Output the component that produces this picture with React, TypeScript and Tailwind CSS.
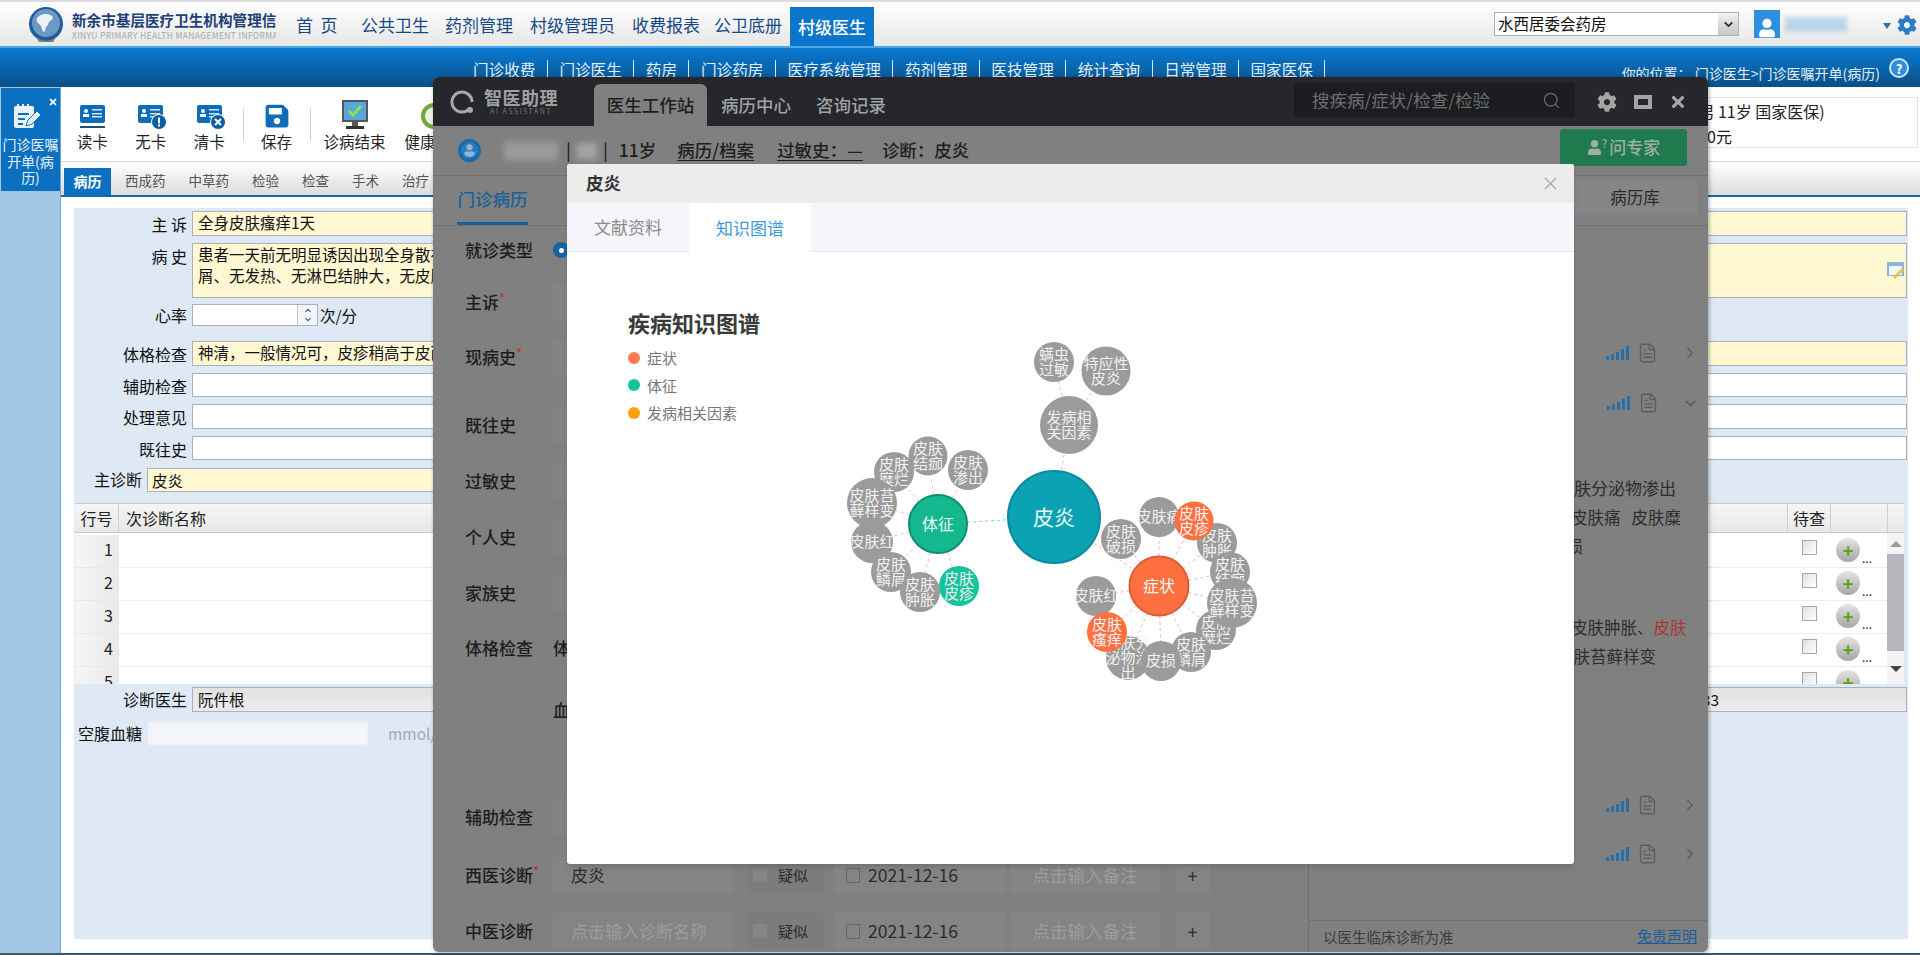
import React from "react";
import { ChevronDown, ChevronRight, FileText, Search, X } from "lucide-react";
import { FaCog, FaUser, FaTimes, FaSave } from "react-icons/fa";

const navItems = [
  { label: "首  页", cls: "ml-0 w-[42px] whitespace-pre" },
  { label: "公共卫生", cls: "ml-[23px]" },
  { label: "药剂管理", cls: "ml-[16px]" },
  { label: "村级管理员", cls: "ml-[17px]" },
  { label: "收费报表", cls: "ml-[17px]" },
  { label: "公卫底册", cls: "ml-[14px]" },
];

const subNav = ["门诊收费", "门诊医生", "药房", "门诊药房", "医疗系统管理", "药剂管理", "医技管理", "统计查询", "日常管理", "国家医保"];

const tabs = ["西成药", "中草药", "检验", "检查", "手术", "治疗"];

const GREY = "#9b9b9b";
const ORANGE = "#ff7040";
const TEAL = "#17c39c";

// graph coordinates are relative to the svg box
const nodes = [
  { id: "a", x: 234, y: 42, r: 20, c: GREY, t: ["螨虫", "过敏"] },
  { id: "b", x: 286, y: 51, r: 24.5, c: GREY, t: ["特应性", "皮炎"] },
  { id: "c", x: 249, y: 105, r: 29, c: GREY, t: ["发病相", "关因素"] },
  { id: "d", x: 108, y: 136, r: 19.5, c: GREY, t: ["皮肤", "结痂"] },
  { id: "e", x: 74, y: 152, r: 20, c: GREY, t: ["皮肤", "糜烂"] },
  { id: "f", x: 148, y: 150, r: 20, c: GREY, t: ["皮肤", "渗出"] },
  { id: "g", x: 52, y: 222, r: 21, c: GREY, t: ["皮肤红"] },
  { id: "h", x: 52, y: 183, r: 25, c: GREY, t: ["皮肤苔", "藓样变"] },
  { id: "i", x: 71, y: 252, r: 20, c: GREY, t: ["皮肤", "鳞屑"] },
  { id: "j", x: 100, y: 272, r: 20, c: GREY, t: ["皮肤", "肿胀"] },
  { id: "k", x: 139, y: 266, r: 20, c: TEAL, t: ["皮肤", "皮疹"] },
  { id: "l", x: 301, y: 219, r: 20, c: GREY, t: ["皮肤", "破损"] },
  { id: "m", x: 339, y: 197, r: 20, c: GREY, t: ["皮肤痛"] },
  { id: "o", x: 397, y: 223, r: 20, c: GREY, t: ["皮肤", "肿胀"] },
  { id: "n", x: 374, y: 201, r: 19.5, c: ORANGE, t: ["皮肤", "皮疹"] },
  { id: "p", x: 410, y: 252, r: 20, c: GREY, t: ["皮肤", "结痂"] },
  { id: "r", x: 396, y: 310, r: 20, c: GREY, t: ["皮肤", "糜烂"] },
  { id: "q", x: 412, y: 283, r: 25, c: GREY, t: ["皮肤苔", "藓样变"] },
  { id: "s", x: 371, y: 332, r: 20, c: GREY, t: ["皮肤", "鳞屑"] },
  { id: "u", x: 308, y: 338, r: 22, c: GREY, t: ["皮肤分", "泌物渗", "出"] },
  { id: "t", x: 341, y: 341, r: 20, c: GREY, t: ["皮损"] },
  { id: "w", x: 276, y: 276, r: 20, c: GREY, t: ["皮肤红"] },
  { id: "v", x: 287, y: 312, r: 20, c: ORANGE, t: ["皮肤", "瘙痒"] },
];

const hubs = [
  { x: 234, y: 197, r: 46, c: "#0ba2b4", s: "#0a8a9e", t: "皮炎", f: 21 },
  { x: 118, y: 204, r: 29, c: "#15b78f", s: "#0f8f72", t: "体征", f: 16 },
  { x: 339, y: 266, r: 29.5, c: "#ff7040", s: "#d95c33", t: "症状", f: 16 },
];

const edges = [
  { from: [234, 197], to: [118, 204], c: "#7fd4cc" },
  { from: [234, 197], to: [249, 105], c: "#c9c9c9" },
  { from: [234, 197], to: [339, 266], c: "#f3b8a0" },
  { from: [249, 105], to: [234, 42], c: "#c9c9c9" },
  { from: [249, 105], to: [286, 51], c: "#c9c9c9" },
  ...["d", "e", "f", "g", "h", "i", "j", "k"].map((id) => {
    const n = nodes.find((x) => x.id === id)!;
    return { from: [118, 204], to: [n.x, n.y], c: "#e3c4c0" };
  }),
  ...["l", "m", "n", "o", "p", "q", "r", "s", "t", "u", "v", "w"].map((id) => {
    const n = nodes.find((x) => x.id === id)!;
    return { from: [339, 266], to: [n.x, n.y], c: "#eeb9b0" };
  }),
];

const KnowledgeGraph = () => (
  <svg viewBox="0 0 460 380" className="absolute left-[253px] top-[156px] h-[380px] w-[460px]">
    {edges.map((e, i) => (
      <line key={i} x1={e.from[0]} y1={e.from[1]} x2={e.to[0]} y2={e.to[1]} stroke={e.c} strokeWidth="1" strokeDasharray="3 3" />
    ))}
    {nodes.map((n) => (
      <g key={n.id}>
        <circle cx={n.x} cy={n.y} r={n.r} fill={n.c} />
        {n.t.map((line, i) => (
          <text
            key={i}
            x={n.x}
            y={n.y + 5 + (i - (n.t.length - 1) / 2) * 15}
            textAnchor="middle"
            fontSize="15"
            fill="#f1f1f1"
            fontFamily="'Noto Sans CJK SC', sans-serif"
          >
            {line}
          </text>
        ))}
      </g>
    ))}
    {hubs.map((h) => (
      <g key={h.t}>
        <circle cx={h.x} cy={h.y} r={h.r} fill={h.c} stroke={h.s} strokeWidth="2" />
        <text x={h.x} y={h.y + h.f * 0.36} textAnchor="middle" fontSize={h.f} fill="#e8fbf8" fontFamily="'Noto Sans CJK SC', sans-serif">
          {h.t}
        </text>
      </g>
    ))}
  </svg>
);

const CardIcon = ({ badge }: { badge?: "warn" | "x" }) => (
  <svg width="30" height="26" viewBox="0 0 30 26">
    <rect x="1" y="1" width="25" height="18" rx="2" fill="#0f6cb8" />
    <circle cx="7" cy="7" r="2" fill="#fff" />
    <rect x="4" y="10" width="6" height="3" fill="#fff" />
    <rect x="13" y="5" width="10" height="1.5" fill="#cfe4f5" />
    <rect x="13" y="9" width="10" height="1.5" fill="#cfe4f5" />
    <rect x="13" y="12" width="10" height="1.5" fill="#cfe4f5" />
    {!badge && <rect x="1" y="22" width="25" height="2" fill="#1a4f80" />}
    {badge && <circle cx="22" cy="18" r="7.5" fill="#0b5ea4" stroke="#fff" />}
    {badge === "warn" && <rect x="21" y="13.5" width="2" height="6" fill="#fff" />}
    {badge === "warn" && <rect x="21" y="20.5" width="2" height="2" fill="#fff" />}
    {badge === "x" && <path d="M19 15l6 6M25 15l-6 6" stroke="#fff" strokeWidth="2" />}
  </svg>
);

const MonitorIcon = () => (
  <svg width="28" height="32" viewBox="0 0 28 32">
    <rect x="1" y="1" width="26" height="22" fill="#555" />
    <rect x="3" y="3" width="22" height="18" fill="#57a6dc" />
    <path d="M8 12l4 4 8-9" stroke="#8fe04a" strokeWidth="3" fill="none" />
    <rect x="11" y="23" width="6" height="4" fill="#555" />
    <rect x="5" y="27" width="18" height="3" fill="#333" />
  </svg>
);

const Signal = () => (
  <span className="flex h-[14px] items-end gap-[2px]">
    <span className="h-[4px] w-[3px] bg-[#2a6ea6]" />
    <span className="h-[6px] w-[3px] bg-[#2a6ea6]" />
    <span className="h-[8px] w-[3px] bg-[#2a6ea6]" />
    <span className="h-[11px] w-[3px] bg-[#2a6ea6]" />
    <span className="h-[14px] w-[3px] bg-[#2a6ea6]" />
  </span>
);

const ResultRow = ({ open, cls }: { open?: boolean; cls: string }) => (
  <div className={`flex h-[40px] items-center justify-end pr-[9px] ${cls}`}>
    <Signal />
    <FileText className="ml-[8px] h-[24px] w-[21px] text-[#5c5c5c]" strokeWidth={1.5} />
    {open ? (
      <ChevronDown className="ml-[23px] h-[17px] w-[17px] text-[#5c5c5c]" />
    ) : (
      <ChevronRight className="ml-[23px] h-[18px] w-[18px] text-[#5c5c5c]" />
    )}
  </div>
);

const FormRow = ({
  label,
  cls,
  h,
  yellow,
  lines,
}: {
  label: string;
  cls: string;
  h: string;
  yellow?: boolean;
  lines?: string[];
}) => (
  <div className={`flex ${cls} ${h}`}>
    <label className="w-[113px] pt-[2px] text-right text-[16px] leading-[22px] text-[#111]">{label}</label>
    <div
      className={`ml-[5px] flex-1 overflow-hidden border border-[#aab0bf] px-[5px] text-[15.5px] leading-[21px] text-[#111] ${
        yellow ? "bg-[#fff8d2]" : "bg-white"
      }`}
    >
      {lines?.map((l) => (
        <div key={l} className="whitespace-nowrap">
          {l}
        </div>
      ))}
    </div>
  </div>
);

const TableRow = ({ n }: { n: number }) => (
  <div className="flex h-[33px] shrink-0">
    <div className="w-[44px] border-b border-[#e8e8e8] bg-gradient-to-r from-[#f6f6f6] to-[#e9e9e9] pr-[6px] pt-[2px] text-right text-[16px] text-[#222]">
      {n}
    </div>
    <div className="flex-1 border-b border-[#ececec] bg-white" />
    <div className="flex w-[44px] justify-center border-b border-[#ececec] bg-white pt-[5px]">
      <span className="h-[15px] w-[15px] border border-[#a8a8a8] bg-gradient-to-br from-[#e0e0e0] to-white" />
    </div>
    <div className="relative flex w-[56px] justify-start border-b border-[#ececec] bg-white pl-[5px] pt-[3px]">
      <span className="flex h-[24px] w-[24px] items-center justify-center rounded-full bg-gradient-to-b from-[#e4e4e4] to-[#a6a6a6] text-[18px] font-bold leading-none text-[#5aa012]">
        +
      </span>
      <span className="mb-[3px] ml-[2px] self-end text-[12px] leading-none text-[#222]">...</span>
    </div>
  </div>
);

const DiagnosisRow = ({ cls, name, filled }: { cls: string; name: string; filled?: boolean }) => (
  <div className={`flex h-[40px] items-center pl-[32px] ${cls}`}>
    <span className="w-[88px] text-[17px] font-medium text-[#1d1d1d]">
      {name}
      {filled && <sup className="text-[#c0392b]">*</sup>}
    </span>
    <div className={`flex h-[36px] w-[180px] items-center whitespace-nowrap bg-[#848484] pl-[18px] text-[17px] ${filled ? "text-[#2b2b2b]" : "text-[#9d9d9d]"}`}>
      {filled ? "皮炎" : "点击输入诊断名称"}
    </div>
    <div className="ml-[16px] flex h-[36px] w-[74px] items-center bg-[#7c7c7c] pl-[4px]">
      <span className="h-[14px] w-[14px] bg-[#858585]" />
      <span className="ml-[11px] text-[15px] text-[#2b2b2b]">疑似</span>
    </div>
    <div className="ml-[11px] flex h-[36px] w-[172px] items-center bg-[#848484] pl-[12px] text-[17.5px] text-[#2b2b2b]">
      <span className="mr-[8px] h-[15px] w-[14px] border border-[#666]" />
      2021-12-16
    </div>
    <div className="ml-[4px] flex h-[36px] w-[150px] items-center justify-center bg-[#848484] text-[17.5px] text-[#9d9d9d]">点击输入备注</div>
    <div className="ml-[15px] flex h-[36px] w-[35px] items-center justify-center bg-[#848484] text-[18px] text-[#2b2b2b]">+</div>
  </div>
);

const AsstRow = ({ label, cls, mark, children }: { label: string; cls: string; mark?: boolean; children?: React.ReactNode }) => (
  <div className={`flex h-[40px] items-center pl-[32px] ${cls}`}>
    <span className="w-[88px] text-[17px] font-medium text-[#1d1d1d]">
      {label}
      {mark && <sup className="text-[#c0392b]">*</sup>}
    </span>
    {children ?? <div className="h-[36px] flex-1 bg-[#838383]" />}
  </div>
);

const Modal = () => (
  <div className="absolute left-[134px] top-[87px] flex h-[700px] w-[1007px] flex-col rounded-[3px] bg-white shadow-md">
    <div className="flex h-[39px] shrink-0 items-center justify-between rounded-t-[3px] bg-[#ececec] pl-[19px] pr-[13px]">
      <span className="text-[17.5px] font-bold text-[#333]">皮炎</span>
      <X className="h-[21px] w-[21px] text-[#a8a8a8]" strokeWidth={1.5} />
    </div>
    <div className="flex h-[49px] shrink-0 border-b border-[#e4e6ee] bg-[#f5f6fb]">
      <div className="flex w-[122px] items-center justify-center text-[17px] text-[#8a8a8a]">文献资料</div>
      <div className="-mb-px flex w-[122px] items-center justify-center bg-white text-[17px] text-[#3b9ae1]">知识图谱</div>
    </div>
    <div className="pl-[61px] pt-[55px]">
      <h2 className="text-[22px] font-bold leading-[30px] text-[#3a3a3a]">疾病知识图谱</h2>
      <div className="mt-[7px] flex flex-col text-[15px] leading-[27.5px] text-[#777]">
        <div className="flex items-center">
          <span className="mr-[7px] h-[12px] w-[12px] rounded-full bg-[#ff7a55]" />
          症状
        </div>
        <div className="flex items-center">
          <span className="mr-[7px] h-[12px] w-[12px] rounded-full bg-[#12c49a]" />
          体征
        </div>
        <div className="flex items-center">
          <span className="mr-[7px] h-[12px] w-[12px] rounded-full bg-[#ff9f0a]" />
          发病相关因素
        </div>
      </div>
    </div>
    <KnowledgeGraph />
  </div>
);

const AssistantWindow = () => (
  <div className="absolute left-[433px] top-[-10px] flex h-[875px] w-[1275px] flex-col overflow-hidden rounded-[6px] bg-[#808080] shadow-[1px_1px_4px_rgba(0,0,0,0.35)]">
    <div className="flex h-[49px] shrink-0 bg-[#25272c]">
      <div className="flex w-[161px] items-center pl-[17px]">
        <svg width="26" height="26" viewBox="0 0 26 26" fill="none">
          <path d="M20 19a10 10 0 1 1 2-6" stroke="#a8a8a8" strokeWidth="3" />
          <circle cx="20" cy="21" r="3" fill="#a8a8a8" />
        </svg>
        <div className="ml-[8px] flex flex-col items-center leading-none">
          <span className="text-[18px] font-bold tracking-[0.5px] text-[#a0a0a0]">智医助理</span>
          <span className="mt-[2px] text-[7px] tracking-[1.5px] text-[#777]">AI ASSISTANT</span>
        </div>
      </div>
      <div className="mt-[7px] flex h-[42px] w-[113px] items-center justify-center rounded-t-[6px] bg-[#808080] text-[17.5px] font-medium text-[#1e1e1e]">
        医生工作站
      </div>
      <div className="ml-[14px] flex items-center whitespace-nowrap pt-[8px] text-[17.5px] font-medium text-[#a2a2a2]">病历中心</div>
      <div className="ml-[25px] flex items-center whitespace-nowrap pt-[8px] text-[17.5px] font-medium text-[#a2a2a2]">咨询记录</div>
      <div className="ml-[408px] mt-[6px] flex h-[34px] w-[281px] items-center justify-between rounded-[3px] bg-[#1b1d21] pl-[18px] pr-[14px] text-[17.5px] text-[#6e6e6e]">
        搜疾病/症状/检查/检验
        <Search className="h-[19px] w-[19px]" strokeWidth={1.5} />
      </div>
      <FaCog className="ml-[22px] mt-[15px] h-[20px] w-[20px] text-[#a4a4a4]" />
      <span className="ml-[17px] mt-[18px] h-[14px] w-[18px] border-[4px] border-[#a4a4a4]" />
      <FaTimes className="ml-[17px] mt-[16px] h-[18px] w-[18px] text-[#a4a4a4]" />
    </div>

    <div className="flex h-[50px] shrink-0 items-center whitespace-nowrap border-b border-[#727272] pl-[25px] text-[17.5px] font-medium text-[#1f1f1f]">
      <FaUser className="box-content h-[13px] w-[13px] rounded-full border-[3px] border-[#1a6aa8] bg-[#2a7ab8] p-[2px] text-[#8fb6d4]" />
      <span className="ml-[23px] h-[18px] w-[54px] bg-[#9a9a9a] blur-[3px]" />
      <span className="ml-[8px]">|</span>
      <span className="ml-[6px] h-[16px] w-[20px] bg-[#a5a5a5] blur-[3px]" />
      <span className="ml-[6px]">|</span>
      <span className="ml-[11px]">11岁</span>
      <span className="ml-[21px] underline underline-offset-[3px]">病历/档案</span>
      <span className="ml-[23px] underline underline-offset-[3px]">过敏史：—</span>
      <span className="ml-[19px]">诊断：皮炎</span>
      <div className="mb-[7px] ml-auto mr-[21px] flex h-[37px] w-[127px] items-center justify-center rounded-[3px] bg-[#1f7a4e] text-[17px] text-[#9cb0a6]">
        <FaUser className="h-[15px] w-[15px]" />
        <span className="mb-[8px] mr-[2px] text-[11px] leading-none">?</span>
        问专家
      </div>
    </div>

    <div className="flex min-h-0 flex-1">
      <div className="w-[876px] shrink-0 border-r border-[#707070]">
        <div className="flex h-[50px] border-b border-[#727272] pl-[24px]">
          <span className="flex w-[71px] items-center justify-center whitespace-nowrap border-b-[3px] border-[#17609a] text-[17.5px] font-medium text-[#1a6299]">门诊病历</span>
        </div>
        <AsstRow label="就诊类型" cls="mt-[4px]">
          <span className="flex h-[16px] w-[16px] items-center justify-center rounded-full bg-[#1565a5]">
            <span className="h-[5px] w-[5px] rounded-full bg-white" />
          </span>
        </AsstRow>
        <AsstRow label="主诉" cls="mt-[12px]" mark />
        <AsstRow label="现病史" cls="mt-[15px]" mark />
        <AsstRow label="既往史" cls="mt-[28px]" />
        <AsstRow label="过敏史" cls="mt-[16px]" />
        <AsstRow label="个人史" cls="mt-[16px]" />
        <AsstRow label="家族史" cls="mt-[16px]" />
        <AsstRow label="体格检查" cls="mt-[15px]">
          <span className="text-[17px] font-medium text-[#1d1d1d]">体温</span>
        </AsstRow>
        <AsstRow label="" cls="mt-[22px]">
          <span className="text-[17px] font-medium text-[#1d1d1d]">血压</span>
        </AsstRow>
        <AsstRow label="辅助检查" cls="mt-[67px]" />
        <DiagnosisRow cls="mt-[18px]" name="西医诊断" filled />
        <DiagnosisRow cls="mt-[16px]" name="中医诊断" />
      </div>

      <div className="flex min-w-0 flex-1 flex-col">
        <div className="h-[50px] border-b border-[#727272] pr-[11px] pt-[4px]">
          <div className="ml-auto flex h-[35px] w-[124px] items-center justify-center bg-[#868686] text-[16.5px] text-[#2a2a2a]">病历库</div>
        </div>
        <ResultRow cls="mt-[107px]" />
        <ResultRow cls="mt-[10px]" open />
        <div className="mt-[50px] whitespace-nowrap text-[16.5px] leading-[29.5px] text-[#2e2e2e]">
          <div className="pl-[248px] text-[17px]">皮肤分泌物渗出</div>
          <div className="pl-[262px]">皮肤痛&nbsp;&nbsp;&nbsp;皮肤糜</div>
          <div className="pl-[241px]">破损</div>
          <div className="h-[51px]" />
          <div className="pl-[262px]">
            皮肤肿胀、<span className="text-[#a83a36]">皮肤</span>
          </div>
          <div className="pl-[248px]">皮肤苔藓样变</div>
        </div>
        <ResultRow cls="mt-[113px]" />
        <ResultRow cls="mt-[9px]" />
        <div className="mt-auto flex h-[32px] items-center justify-between border-t border-[#727272] pl-[14px] pr-[11px] text-[14.5px] text-[#3c3c3c]">
          以医生临床诊断为准
          <span className="text-[15px] text-[#1a5f9a] underline">免责声明</span>
        </div>
      </div>
    </div>

    <Modal />
  </div>
);

const Toolbar = () => (
  <div className="flex h-[75px] shrink-0 border-b border-[#d8d8d8] pl-[2px] text-[15.5px] text-[#222]">
    {[
      { label: "读卡" },
      { label: "无卡", badge: "warn" as const },
      { label: "清卡", badge: "x" as const },
    ].map((b) => (
      <div key={b.label} className="flex w-[58.5px] flex-col items-center pt-[17px]">
        <span className="h-[26px] pl-[3px]">
          <CardIcon badge={b.badge} />
        </span>
        <span className="mt-[1px] leading-[20px]">{b.label}</span>
      </div>
    ))}
    <span className="ml-[4px] mt-[22px] h-[32px] w-px bg-[#d0d0d0]" />
    <div className="flex w-[66px] flex-col items-center pt-[16px]">
      <FaSave className="h-[26px] w-[24px] text-[#0f6cb8]" />
      <span className="mt-[2px] leading-[20px]">保存</span>
    </div>
    <span className="mt-[22px] h-[32px] w-px bg-[#d0d0d0]" />
    <div className="flex w-[88px] flex-col items-center pt-[12px]">
      <MonitorIcon />
      <span className="leading-[20px]">诊病结束</span>
    </div>
    <div className="ml-[6px] flex w-[64px] flex-col items-start pt-[16px]">
      <span className="ml-[16px] h-[26px] w-[26px] rounded-full border-[4px] border-[#6fa83c] bg-[#eef5e4]" />
      <span className="mt-[2px] leading-[20px]">健康</span>
    </div>
    <div className="ml-auto mr-[2px] mt-[10px] flex h-[51px] w-[320px] flex-col border border-[#e2e2e2] pt-px text-[16px] leading-[25px]">
      <div className="pl-[94px]">(男 11岁 国家医保)</div>
      <div className="pl-[108px]">0元</div>
    </div>
  </div>
);

const App = () => (
  <div className="flex h-[955px] w-[1920px] flex-col overflow-hidden bg-white font-['Noto_Sans_CJK_SC',sans-serif]">
    <header className="flex h-[46px] shrink-0 border-t-2 border-[#dcdcdc] bg-gradient-to-b from-white to-[#e6e6e6] pl-[28px]">
      <svg width="36" height="38" viewBox="0 0 36 38" className="mt-[4px] shrink-0">
        <circle cx="18" cy="18" r="17" fill="#1d5c9e" />
        <circle cx="18" cy="17" r="14" fill="#6d97c4" />
        <path d="M9 12c4-5 11-5 15-2 2 2 0 4-2 5s-1 4-3 5-1 5-3 6c-2-1-2-4-3-6s-6-4-4-8z" fill="#eef2f7" />
        <path d="M8 31c5 5 15 5 20 0l-3 5H11z" fill="#7d7d7d" />
      </svg>
      <div className="ml-[8px] w-[204px] shrink-0 overflow-hidden whitespace-nowrap pt-[8px]">
        <div className="text-[14.6px] font-bold leading-[20px] text-[#1f3f78]">新余市基层医疗卫生机构管理信</div>
        <div className="text-[8.5px] leading-[10px] tracking-[0.35px] text-[#a8a8a8]">XINYU PRIMARY HEALTH MANAGEMENT INFORMATI</div>
      </div>
      <nav className="ml-[20px] flex">
        {navItems.map((n) => (
          <span key={n.label} className={`mt-[9px] text-[17px] leading-[28px] text-[#17498a] ${n.cls}`}>
            {n.label}
          </span>
        ))}
        <span className="ml-[8px] mt-[5px] flex h-[39px] w-[84px] items-center justify-center bg-[#0c76cc] text-[17px] font-medium text-white">村级医生</span>
      </nav>
      <div className="ml-auto flex h-[24px] w-[245px] items-center justify-between self-center border border-[#b0b0b0] bg-white pl-[3px] text-[15.5px] text-[#111]">
        水西居委会药房
        <span className="flex h-[22px] w-[20px] items-center justify-center bg-gradient-to-b from-[#f2f2f2] to-[#c6c6c6]">
          <ChevronDown className="h-[13px] w-[13px] text-[#234]" strokeWidth={3.5} />
        </span>
      </div>
      <span className="ml-[15px] mt-[8px] flex h-[28px] w-[26px] items-end justify-center bg-[#2e8fe0]">
        <FaUser className="h-[20px] w-[16px] text-white" />
      </span>
      <span className="ml-[5px] mt-[15px] h-[15px] w-[62px] bg-[#bcd4e8] blur-[2px]" />
      <span className="ml-[36px] mt-[21px] h-0 w-0 border-x-[4px] border-t-[6px] border-x-transparent border-t-[#2c6eb0]" />
      <FaCog className="ml-[6px] mr-[3px] mt-[13px] h-[20px] w-[20px] text-[#2c7cc4]" />
    </header>

    <div className="flex h-[41px] shrink-0 items-start border-t-[2px] border-[#4aa6e4] bg-gradient-to-b from-[#0a78d0] via-[#0866ae] to-[#0a4f85] pl-[473px]">
      <div className="flex items-start gap-[11.5px] pt-[10px] text-[15.6px] leading-[22px] text-[#e3eef8]">
        {subNav.map((s, i) => (
          <React.Fragment key={s}>
            {i > 0 && <span className="mt-[2px] h-[20px] w-px bg-[#dce9f5]" />}
            <span>{s}</span>
          </React.Fragment>
        ))}
        <span className="mt-[2px] h-[20px] w-px bg-[#dce9f5]" />
      </div>
      <span className="ml-auto whitespace-pre pt-[15px] text-[14px] leading-[20px] text-[#e3eef8]">你的位置： 门诊医生&gt;门诊医嘱开单(病历)</span>
      <span className="ml-[9px] mr-[11px] mt-[10px] flex h-[20px] w-[20px] items-center justify-center rounded-full border-2 border-[#cfe6f8] bg-[#2f8fd8] text-[13px] font-bold leading-none text-white">?</span>
    </div>

    <main className="relative flex min-h-0 flex-1">
      <aside className="w-[61px] shrink-0 border-r border-[#6aa9dc] bg-[#a2c5e2] pl-px pt-px">
        <div className="relative flex h-[103px] w-[59px] flex-col items-center bg-[#0c70c0] pt-[14px] text-white">
          <svg width="30" height="28" viewBox="0 0 30 28" className="mr-[8px]">
            <rect x="2" y="4" width="20" height="22" rx="2" fill="#e8f2fa" />
            <path d="M6 2v5M11 2v5M16 2v5" stroke="#e8f2fa" strokeWidth="2" />
            <path d="M6 12h11M6 17h7M6 22h5" stroke="#0c70c0" strokeWidth="2" />
            <path d="M14 24l2-6 9-9 4 4-9 9z" fill="#e8f2fa" stroke="#0c70c0" />
          </svg>
          <FaTimes className="absolute right-[2px] top-[9px] h-[10px] w-[10px]" />
          <div className="mt-[6px] w-[56px] text-center text-[14px] leading-[16.5px] text-[#e6f1fb]">门诊医嘱开单(病历)</div>
        </div>
      </aside>

      <div className="flex min-w-0 flex-1 flex-col">
        <Toolbar />
        <div className="flex h-[35px] shrink-0 items-end border-b-[2px] border-[#1368a8] bg-gradient-to-b from-white to-[#dcdcdc] pl-[3px]">
          <span className="flex h-[27px] w-[47px] items-center justify-center bg-[#0c70c0] text-[14px] font-bold text-white">病历</span>
          <div className="mb-[5px] ml-[14px] flex gap-[23px] text-[13.5px] leading-[20px] text-[#555]">
            {tabs.map((t) => (
              <span key={t}>{t}</span>
            ))}
          </div>
        </div>

        <section className="ml-[13px] mr-[12px] mt-[11px] flex h-[731px] flex-col bg-[#dfe8f5] pr-px">
          <FormRow label="主 诉" cls="mt-[3px]" h="h-[25px]" yellow lines={["全身皮肤瘙痒1天"]} />
          <div className="relative">
            <FormRow
              label="病 史"
              cls="mt-[7px]"
              h="h-[55px]"
              yellow
              lines={["患者一天前无明显诱因出现全身散在皮疹，伴瘙痒，皮疹表面有少量鳞", "屑、无发热、无淋巴结肿大，无皮肤破损及渗出"]}
            />
            <svg width="18" height="17" viewBox="0 0 18 17" className="absolute right-[2px] top-[26px]">
              <rect x="0" y="0" width="17" height="14" fill="#8db4e0" />
              <rect x="2" y="4" width="13" height="9" fill="#f4f8fc" />
              <path d="M6 15l9-9 2 2-9 9z" fill="#f0c040" />
            </svg>
          </div>
          <div className="mt-[6px] flex h-[22px]">
            <label className="w-[113px] text-right text-[16px] leading-[22px] text-[#111]">心率</label>
            <div className="ml-[5px] flex w-[126px] border border-[#aab0bf] bg-white">
              <span className="flex-1" />
              <span className="flex w-[20px] flex-col items-center justify-center border-l border-[#c6c6c6] bg-[#f2f4f8] text-[#2a5f94]">
                <ChevronDown className="h-[9px] w-[12px] rotate-180" strokeWidth={3} />
                <ChevronDown className="h-[9px] w-[12px]" strokeWidth={3} />
              </span>
            </div>
            <span className="ml-[2px] text-[15.5px] leading-[22px] text-[#111]">次/分</span>
          </div>
          <FormRow label="体格检查" cls="mt-[15px]" h="h-[25px]" yellow lines={["神清，一般情况可，皮疹稍高于皮面"]} />
          <FormRow label="辅助检查" cls="mt-[7px]" h="h-[24px]" />
          <FormRow label="处理意见" cls="mt-[7px]" h="h-[25px]" />
          <FormRow label="既往史" cls="mt-[7px]" h="h-[24px]" />
          <div className="mt-[8px] flex h-[24px]">
            <label className="w-[68px] text-right text-[16px] leading-[22px] text-[#111]">主诊断</label>
            <div className="ml-[5px] w-[600px] border border-[#aab0bf] bg-[#fff8d2] pl-[4px] text-[15.5px] leading-[22px] text-[#111]">皮炎</div>
          </div>

          <div className="ml-px mr-[3px] mt-[11px] flex h-[181px] flex-col">
            <div className="flex h-[30px] shrink-0 border-b border-t border-[#c8c8c8] bg-gradient-to-b from-[#f6f6f6] to-[#e8e8e8] text-[16px] leading-[28px] text-[#222]">
              <span className="w-[44px] border-r border-[#cfcfcf] text-center">行号</span>
              <span className="flex-1 pl-[7px]">次诊断名称</span>
              <span className="w-[44px] border-x border-[#cfcfcf] text-center">待查</span>
              <span className="w-[56px]" />
              <span className="w-[17px] border-l border-[#cfcfcf]" />
            </div>
            <div className="flex min-h-0 flex-1 overflow-hidden bg-white">
              <div className="flex min-w-0 flex-1 flex-col pt-[2px]">
                {[1, 2, 3, 4, 5].map((n) => (
                  <TableRow key={n} n={n} />
                ))}
              </div>
              <div className="flex w-[17px] shrink-0 flex-col items-center bg-[#f4f4f4]">
                <span className="mt-[8px] h-0 w-0 border-x-[6px] border-b-[6px] border-x-transparent border-b-[#9a9a9a]" />
                <span className="mt-[7px] h-[97px] w-[17px] bg-[#b6b6bc]" />
                <span className="mt-[15px] h-0 w-0 border-x-[6px] border-t-[6px] border-x-transparent border-t-[#444]" />
              </div>
            </div>
          </div>

          <div className="mt-[3px] flex h-[25px]">
            <label className="w-[113px] text-right text-[16px] leading-[24px] text-[#111]">诊断医生</label>
            <div className="ml-[5px] flex flex-1 justify-between border border-[#aab0bf] bg-gradient-to-b from-[#e2e2e2] to-[#ececec] pl-[5px] pr-[187px] text-[15.5px] leading-[23px] text-[#111]">
              <span>阮件根</span>
              <span>33</span>
            </div>
          </div>
          <div className="mt-[10px] flex h-[23px]">
            <label className="w-[68px] text-right text-[16px] leading-[23px] text-[#111]">空腹血糖</label>
            <div className="ml-[6px] w-[220px] bg-[#f3f5f9] blur-[1px]" />
            <span className="ml-[20px] text-[15.5px] leading-[23px] text-[#a8a8a8]">mmol/L</span>
          </div>
        </section>
        <div className="flex-1" />
      </div>

      <AssistantWindow />
    </main>
    <div className="h-[2px] shrink-0 bg-[#3d5a66]" />
  </div>
);

export default App;
